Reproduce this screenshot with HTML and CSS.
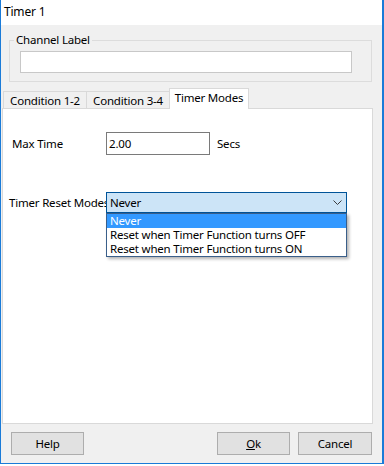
FILE: index.html
```html
<!DOCTYPE html>
<html lang="en">
<head>
    <meta charset="UTF-8">
    <meta name="viewport" content="width=device-width, initial-scale=1.0">
    <title>Timer 1</title>
    <link rel="stylesheet" href="styles.css">
</head>
<body>
    <!-- dialog window -->
    <div class="window">
        <div class="titlebar">Timer 1</div>

        <div class="dialog">
            <!-- channel label group -->
            <fieldset class="group">
                <legend>Channel Label</legend>
                <div class="textbox wide"></div>
            </fieldset>

            <!-- tabs -->
            <div class="tabs">
                <div class="tab first">Condition 1-2</div>
                <div class="tab second">Condition 3-4</div>
                <div class="tab active">Timer Modes</div>
            </div>

            <div class="panel">
                <div class="row row-time">
                    <span class="label label-time">Max Time</span>
                    <div class="textbox small">2.00</div>
                    <span class="unit">Secs</span>
                </div>

                <div class="row row-reset">
                    <span class="label label-reset">Timer Reset Modes</span>
                    <div class="combo">
                        <span>Never</span>
                        <svg class="chevron" width="9" height="5" viewBox="0 0 9 5">
                            <path d="M0.5 0.5 L4.5 4.5 L8.5 0.5" fill="none" stroke="#3c3c3c" stroke-width="1"/>
                        </svg>
                        <!-- open list -->
                        <ul class="dropdown">
                            <li class="selected">Never</li>
                            <li>Reset when Timer Function turns OFF</li>
                            <li>Reset when Timer Function turns ON</li>
                        </ul>
                    </div>
                </div>
            </div>

            <!-- bottom buttons -->
            <div class="buttons">
                <button class="btn">Help</button>
                <span class="spacer"></span>
                <button class="btn"><u>O</u>k</button>
                <button class="btn cancel">Cancel</button>
            </div>
        </div>
    </div>
</body>
</html>
```

FILE: styles.css
```css
/* base */
body {
    margin: 0;
    background: #ffffff;
    font-family: "Noto Sans", "Open Sans", sans-serif;
    font-size: 11.5px;
    letter-spacing: -0.2px;
    color: #000;
}

.window {
    box-sizing: border-box;
    width: 384px;
    height: 464px;
    border-left: 1px solid #1a7bd8;
    border-right: 2px solid #1a7bd8;
    border-bottom: 1px solid #1a7bd8;
    display: flex;
    flex-direction: column;
}

.titlebar {
    height: 25px;
    line-height: 24px;
    padding-left: 3px;
    font-size: 12px;
    background: #fff;
}

.dialog {
    flex: 1;
    background: #f0f0f0;
    padding-top: 8px;
    display: flex;
    flex-direction: column;
}

/* group box */
.group {
    margin: 0 10px 0 8px;
    padding: 4px 19px 8px 10px;
    border: 1px solid #dcdcdc;
    min-width: 0;
}

.group legend {
    margin-left: -6px;
    padding: 0 2px;
    line-height: 14px;
}

.textbox {
    box-sizing: border-box;
    height: 22px;
    background: #fff;
    border: 1px solid #c8c8c8;
    padding: 2px 2px;
    line-height: 16px;
}

.textbox.small {
    width: 104px;
    height: 23px;
    border-color: #7a7a7a;
    line-height: 17px;
}

/* tabs */
.tabs {
    display: flex;
    align-items: flex-end;
    height: 20px;
    margin: 7px 0 -1px 2px;
}

.tab {
    box-sizing: border-box;
    height: 18px;
    line-height: 17px;
    text-align: center;
    border: 1px solid #d9d9d9;
    border-bottom: none;
    background: #f0f0f0;
}

.tab.first {
    width: 84px;
}

.tab.second {
    width: 84px;
    margin-left: -1px;
}

.tab.active {
    width: 80px;
    height: 21px;
    line-height: 18px;
    margin-left: -1px;
    background: #fff;
    position: relative;
    z-index: 1;
}

/* tab page */
.panel {
    box-sizing: border-box;
    height: 316px;
    margin: 0 9px 0 1px;
    background: #fff;
    border: 1px solid #d9d9d9;
}

.row {
    display: flex;
    align-items: center;
}

.row-time {
    margin-top: 23px;
    padding-left: 9px;
}

.row-reset {
    margin-top: 37px;
    padding-left: 6px;
}

.label-time {
    width: 94px;
}

.label-reset {
    width: 97px;
    white-space: nowrap;
}

.unit {
    margin-left: 7px;
}

/* combo box */
.combo {
    box-sizing: border-box;
    width: 241px;
    height: 21px;
    line-height: 18px;
    padding-left: 3px;
    background: #cce4f7;
    border: 1px solid #005499;
    display: flex;
    align-items: center;
    justify-content: space-between;
    position: relative;
}

.chevron {
    margin-right: 4px;
}

.dropdown {
    position: absolute;
    left: -1px;
    top: 20px;
    width: 241px;
    box-sizing: border-box;
    margin: 0;
    padding: 0;
    list-style: none;
    background: #fff;
    border: 1px solid #3a5f8a;
    box-shadow: 2px 2px 3px rgba(0, 0, 0, 0.3);
}

.dropdown li {
    height: 14px;
    line-height: 14px;
    padding-left: 3px;
    white-space: nowrap;
}

.dropdown li.selected {
    background: #3399ff;
    color: #fff;
}

/* buttons */
.buttons {
    display: flex;
    margin-top: 8px;
    padding: 0 10px;
    gap: 8px;
}

.spacer {
    flex: 1;
}

.btn {
    box-sizing: border-box;
    width: 73px;
    height: 23px;
    font-family: inherit;
    font-size: 11.5px;
    letter-spacing: -0.2px;
    background: #e1e1e1;
    border: 1px solid #adadad;
    padding: 0;
    color: #000;
}

.btn.cancel {
    width: 74px;
}
```
